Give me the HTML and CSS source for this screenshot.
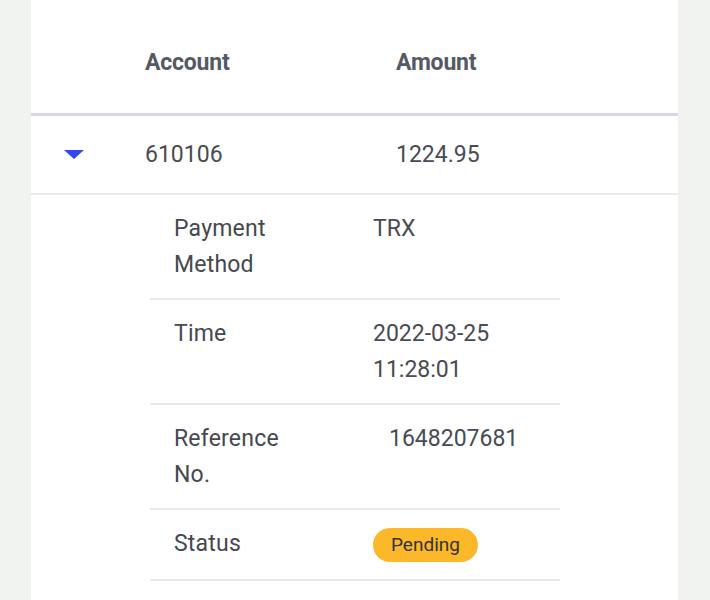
FILE: index.html
```html
<!DOCTYPE html>
<html>
<head>
<meta charset="utf-8">
<link rel="stylesheet" href="styles.css">
</head>
<body>
<div class="card">
  <div class="head">
    <div></div>
    <div class="th">Account</div>
    <div class="th">Amount</div>
  </div>
  <div class="row">
    <div><span class="caret"></span></div>
    <div>610106</div>
    <div>1224.95</div>
  </div>
  <div class="detail">
    <div class="drow">
      <div class="label">Payment Method</div>
      <div class="value">TRX</div>
    </div>
    <div class="drow">
      <div class="label">Time</div>
      <div class="value">2022-03-25 11:28:01</div>
    </div>
    <div class="drow">
      <div class="label">Reference No.</div>
      <div class="value indent">1648207681</div>
    </div>
    <div class="drow last">
      <div class="label">Status</div>
      <div class="value"><span class="badge">Pending</span></div>
    </div>
  </div>
</div>
</body>
</html>
```
FILE: styles.css
```css
html, body {
  margin: 0;
  padding: 0;
  background: #f1f3f1;
}
body {
  font-family: Roboto, "Liberation Sans", sans-serif;
  font-size: 23px;
  color: #484b53;
}
.card {
  margin-left: 31px;
  width: 647px;
  min-height: 600px;
  background: #ffffff;
  box-shadow: -1px 0 0 #f3f1e6, 1px 0 0 #f3f1e6;
}
.head, .row {
  display: grid;
  grid-template-columns: 114px 251px 1fr;
  align-items: center;
}
.head {
  height: 101px;
  padding-top: 12px;
  border-bottom: 3px solid #d8d6ea;
}
.th {
  font-weight: 700;
  color: #555966;
  font-size: 23px;
  letter-spacing: -0.2px;
}
.row {
  height: 77px;
  border-bottom: 2px solid #ebebeb;
}
.caret {
  display: block;
  width: 0;
  height: 0;
  margin-left: 33px;
  border-left: 10px solid transparent;
  border-right: 10px solid transparent;
  border-top: 9px solid #3447ee;
}
.detail {
  margin-left: 119px;
  width: 410px;
}
.drow {
  display: grid;
  grid-template-columns: 223px 1fr;
  padding: 16px 0 15px;
  line-height: 36px;
  border-bottom: 2px solid #e8e8e8;
}
.drow.last {
  padding: 16px 0 16px;
  min-height: 37px;
}
.label {
  padding-left: 24px;
  padding-right: 59px;
  color: #45484f;
  letter-spacing: 0.2px;
}
.value {
  padding-right: 37px;
}
.indent {
  padding-left: 16px;
}
.badge {
  display: inline-block;
  height: 34px;
  line-height: 34px;
  padding: 0 18px;
  border-radius: 17px;
  background: #fbb82a;
  color: #333333;
  font-size: 19px;
  vertical-align: middle;
}
```
